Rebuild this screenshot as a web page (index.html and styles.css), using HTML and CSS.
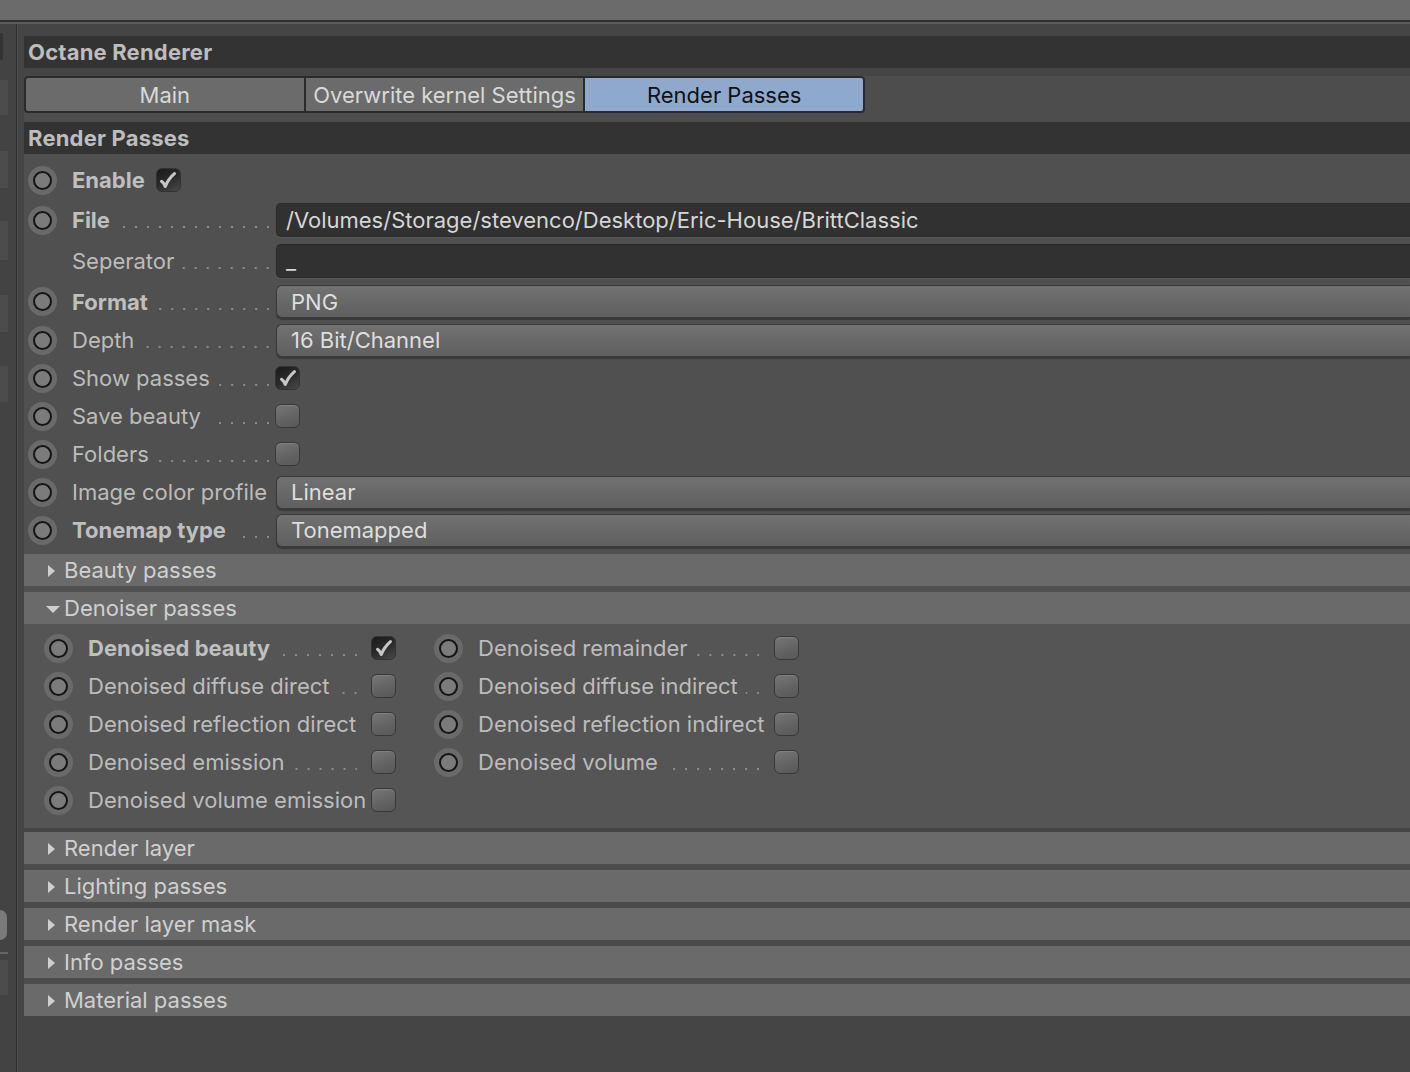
FILE: index.html
```html
<!DOCTYPE html>
<html>
<head>
<meta charset="utf-8">
<link rel="stylesheet" href="styles.css">
</head>
<body>
<div class="topbar"></div>
<div class="topline"></div>
<div class="app">
  <aside class="sidebar">
    <div class="sb-notch"></div>
    <div class="sb-box b1"></div>
    <div class="sb-box b2"></div>
    <div class="sb-box b3"></div>
    <div class="sb-box b4"></div>
    <div class="sb-box b5"></div>
    <div class="sb-knob"></div>
    <div class="sb-rule"></div>
    <div class="sb-box b6"></div>
  </aside>
  <div class="sb-line"></div>
  <main class="main">
    <div class="title">Octane Renderer</div>
    <div class="tabrow">
      <div class="tabs">
        <div class="tab">Main</div>
        <div class="tab">Overwrite kernel Settings</div>
        <div class="tab active">Render Passes</div>
      </div>
    </div>
    <div class="title">Render Passes</div>

    <div class="params">
      <div class="row h40">
        <span class="radio"></span>
        <span class="lbl bold">Enable</span>
        <span class="check on enable-check"><svg viewBox="0 0 24 24"><path d="M5 13.5 Q7.5 15 9 19 Q12.5 10.5 19 5"/></svg></span>
      </div>
      <div class="row h40">
        <span class="radio"></span>
        <span class="label"><span class="bold">File</span><span class="lead"></span></span>
        <span class="field input">/Volumes/Storage/stevenco/Desktop/Eric-House/BrittClassic</span>
      </div>
      <div class="row h42">
        <span class="radio none"></span>
        <span class="label"><span>Seperator</span><span class="lead"></span></span>
        <span class="field input">_</span>
      </div>
      <div class="row h39">
        <span class="radio"></span>
        <span class="label"><span class="bold">Format</span><span class="lead"></span></span>
        <span class="field drop">PNG</span>
      </div>
      <div class="row h38">
        <span class="radio"></span>
        <span class="label"><span>Depth</span><span class="lead"></span></span>
        <span class="field drop">16 Bit/Channel</span>
      </div>
      <div class="row h38">
        <span class="radio"></span>
        <span class="label"><span>Show passes</span><span class="lead"></span></span>
        <span class="check on"><svg viewBox="0 0 24 24"><path d="M5 13.5 Q7.5 15 9 19 Q12.5 10.5 19 5"/></svg></span>
      </div>
      <div class="row h38">
        <span class="radio"></span>
        <span class="label"><span>Save beauty</span><span class="lead"></span></span>
        <span class="check"></span>
      </div>
      <div class="row h38">
        <span class="radio"></span>
        <span class="label"><span>Folders</span><span class="lead"></span></span>
        <span class="check"></span>
      </div>
      <div class="row h38">
        <span class="radio"></span>
        <span class="label"><span>Image color profile</span><span class="lead"></span></span>
        <span class="field drop">Linear</span>
      </div>
      <div class="row h38">
        <span class="radio"></span>
        <span class="label"><span class="bold">Tonemap type</span><span class="lead"></span></span>
        <span class="field drop">Tonemapped</span>
      </div>
    </div>

    <div class="pre-groups">
      <div class="group"><span class="tri-right"></span><span>Beauty passes</span></div>
      <div class="group"><span class="tri-down"></span><span>Denoiser passes</span></div>
    </div>

    <div class="denoise">
      <div class="col col-left">
        <div class="drow">
          <span class="radio"></span>
          <span class="label"><span class="bold">Denoised beauty</span><span class="lead"></span></span>
          <span class="check on"><svg viewBox="0 0 24 24"><path d="M5 13.5 Q7.5 15 9 19 Q12.5 10.5 19 5"/></svg></span>
        </div>
        <div class="drow">
          <span class="radio"></span>
          <span class="label"><span>Denoised diffuse direct</span><span class="lead"></span></span>
          <span class="check"></span>
        </div>
        <div class="drow">
          <span class="radio"></span>
          <span class="label"><span>Denoised reflection direct</span><span class="lead"></span></span>
          <span class="check"></span>
        </div>
        <div class="drow">
          <span class="radio"></span>
          <span class="label"><span>Denoised emission</span><span class="lead"></span></span>
          <span class="check"></span>
        </div>
        <div class="drow">
          <span class="radio"></span>
          <span class="label"><span>Denoised volume emission</span><span class="lead"></span></span>
          <span class="check"></span>
        </div>
      </div>
      <div class="col col-right">
        <div class="drow">
          <span class="radio"></span>
          <span class="label"><span>Denoised remainder</span><span class="lead"></span></span>
          <span class="check"></span>
        </div>
        <div class="drow">
          <span class="radio"></span>
          <span class="label"><span>Denoised diffuse indirect</span><span class="lead"></span></span>
          <span class="check"></span>
        </div>
        <div class="drow">
          <span class="radio"></span>
          <span class="label"><span>Denoised reflection indirect</span><span class="lead"></span></span>
          <span class="check"></span>
        </div>
        <div class="drow">
          <span class="radio"></span>
          <span class="label"><span>Denoised volume</span><span class="lead"></span></span>
          <span class="check"></span>
        </div>
      </div>
    </div>

    <div class="groups">
      <div class="group"><span class="tri-right"></span><span>Render layer</span></div>
      <div class="group"><span class="tri-right"></span><span>Lighting passes</span></div>
      <div class="group"><span class="tri-right"></span><span>Render layer mask</span></div>
      <div class="group"><span class="tri-right"></span><span>Info passes</span></div>
      <div class="group"><span class="tri-right"></span><span>Material passes</span></div>
    </div>
  </main>
</div>
</body>
</html>
```

FILE: styles.css
```css
* { box-sizing: border-box; }

html, body {
  margin: 0;
  padding: 0;
  height: 100%;
  background: #454545;
  overflow: hidden;
}

body {
  font-family: Inter, "Noto Sans", "Liberation Sans", sans-serif;
  font-size: 22px;
  color: #bcbcbc;
}

.topbar {
  height: 20px;
  background: #6b6b6b;
  border-bottom: 2px solid #2e2e2e;
  box-sizing: content-box;
}

.topline {
  height: 2px;
  background: #5c5c5c;
}

.app {
  display: flex;
  align-items: stretch;
  height: calc(100% - 24px);
}

/* left strip */
.sidebar {
  width: 16px;
  flex: none;
  display: flex;
  flex-direction: column;
  align-items: flex-start;
  background: #434343;
}

.sb-notch {
  margin-top: 9px;
  width: 3px;
  height: 27px;
  background: #333;
  border-radius: 0 2px 2px 0;
}

.sb-box {
  width: 8px;
  background: #4c4c4c;
}
.b1 { margin-top: 20px; height: 35px; }
.b2 { margin-top: 36px; height: 37px; }
.b3 { margin-top: 33px; height: 39px; }
.b4 { margin-top: 35px; height: 37px; }
.b5 { margin-top: 34px; height: 36px; }

.sb-knob {
  margin-top: 508px;
  width: 7px;
  height: 30px;
  background: #7a7a7a;
  border-radius: 0 15px 15px 0;
}

.sb-rule {
  margin-top: 12px;
  width: 8px;
  height: 2px;
  background: #666;
}

.b6 { margin-top: 6px; height: 35px; }

.sb-line {
  width: 2px;
  flex: none;
  border-left: 1px solid #2e2e2e;
  background: #4f4f4f;
}

.main {
  flex: 1;
  margin-left: 6px;
  padding-top: 12px;
  display: flex;
  flex-direction: column;
  min-width: 0;
}

.title {
  height: 32px;
  background: #333333;
  padding-left: 4px;
  display: flex;
  align-items: center;
  font-weight: 700;
  color: #bdbdbd;
  letter-spacing: 0.2px;
}

/* tabs */
.tabrow {
  margin-top: 8px;
  height: 46px;
  background: #4d4d4d;
  display: flex;
  align-items: flex-start;
}

.tabs {
  display: flex;
  width: 841px;
  height: 37px;
  border: 2px solid #2b2b2b;
  border-radius: 4px;
  overflow: hidden;
  background: #2b2b2b;
  gap: 2px;
}

.tab {
  flex: 1;
  background: #6b6b6b;
  color: #d9d9d9;
  display: flex;
  align-items: center;
  justify-content: center;
}

.tab.active {
  background: #8ea9cd;
  color: #111;
}

/* parameter rows */
.params {
  background: #505050;
  padding: 6px 0 5px 0;
}

.row {
  display: flex;
  align-items: center;
}
.h38 { height: 38px; }
.h39 { height: 39px; }
.h40 { height: 40px; }
.h42 { height: 42px; }

.radio {
  flex: none;
  width: 29px;
  height: 29px;
  margin-left: 4px;
  margin-right: 15px;
  border-radius: 50%;
  background: #6a6a6a;
  display: flex;
  align-items: center;
  justify-content: center;
}
.radio::after {
  content: "";
  width: 19px;
  height: 19px;
  border-radius: 50%;
  border: 2px solid #151515;
  background: #7b7b7b;
  box-sizing: border-box;
}
.radio.none { visibility: hidden; }

.lbl { color: #bcbcbc; }
.bold { font-weight: 700; color: #bfbfbf; }

.label {
  flex: none;
  width: 204px;
  padding-right: 7px;
  display: flex;
  align-items: baseline;
  white-space: nowrap;
  color: #bcbcbc;
}

.lead {
  flex: 1;
  height: 2px;
  margin-left: 8px;
  background-image: linear-gradient(to right, transparent 0 10px, #8c8c8c 10px 12px);
  background-size: 12px 2px;
  background-repeat: repeat-x;
  background-position: right bottom;
}

.field {
  flex: 1;
  min-width: 0;
  height: 34px;
  display: flex;
  align-items: center;
  white-space: nowrap;
  overflow: hidden;
}

.field.input {
  background: #313131;
  border: 1px solid #2a2a2a;
  border-right: none;
  border-radius: 5px 0 0 5px;
  box-shadow: 0 1px 0 #5a5a5a;
  padding-left: 9px;
  color: #d6d6d6;
}

.field.drop {
  height: 33px;
  background: linear-gradient(#727272, #666666 60%, #606060);
  border: 1px solid #3a3a3a;
  border-right: none;
  border-radius: 6px 0 0 6px;
  box-shadow: 0 2px 1px #3a3a3a;
  padding-left: 14px;
  color: #dedede;
}

/* checkboxes */
.check {
  flex: none;
  width: 25px;
  height: 24px;
  border-radius: 6px;
  border: 1.5px solid #383838;
  background: linear-gradient(160deg, #777777, #626262 60%, #585858);
  box-shadow: inset 0 1px 0 #808080;
  display: flex;
  align-items: center;
  justify-content: center;
  margin-left: -1px;
}

.check.on {
  background: linear-gradient(150deg, #1a1a1a, #2a2a2a 50%, #4a4a4a);
  box-shadow: none;
  border-color: #333;
}

.check svg {
  width: 22px;
  height: 22px;
}
.check svg path {
  fill: none;
  stroke: #c6c6c6;
  stroke-width: 3.4;
  stroke-linecap: round;
  stroke-linejoin: round;
}

.enable-check { margin-left: 11px; }

/* group headers */
.pre-groups {
  background: #505050;
  display: flex;
  flex-direction: column;
  gap: 6px;
}

.group {
  height: 32px;
  background: #6a6a6a;
  display: flex;
  align-items: center;
  padding-left: 24px;
  color: #d0d0d0;
  white-space: nowrap;
}

.tri-right {
  width: 0;
  height: 0;
  border-left: 7px solid #cfcfcf;
  border-top: 6px solid transparent;
  border-bottom: 6px solid transparent;
  margin-right: 9px;
  margin-top: 1px;
}

.tri-down {
  width: 0;
  height: 0;
  border-top: 7px solid #cfcfcf;
  border-left: 7px solid transparent;
  border-right: 7px solid transparent;
  margin-left: -2px;
  margin-right: 4px;
  margin-top: 3px;
}

/* denoiser content */
.denoise {
  background: #555555;
  display: flex;
  padding: 5px 0 9px 16px;
}

.col { display: flex; flex-direction: column; }
.col-left { width: 390px; }

.drow {
  height: 38px;
  display: flex;
  align-items: center;
}

.col-left .label { width: 284px; padding-right: 15px; }
.col-right .label { width: 297px; padding-right: 16px; }

.groups {
  margin-top: 4px;
  display: flex;
  flex-direction: column;
  gap: 6px;
  background: #4b4b4b;
}
```
